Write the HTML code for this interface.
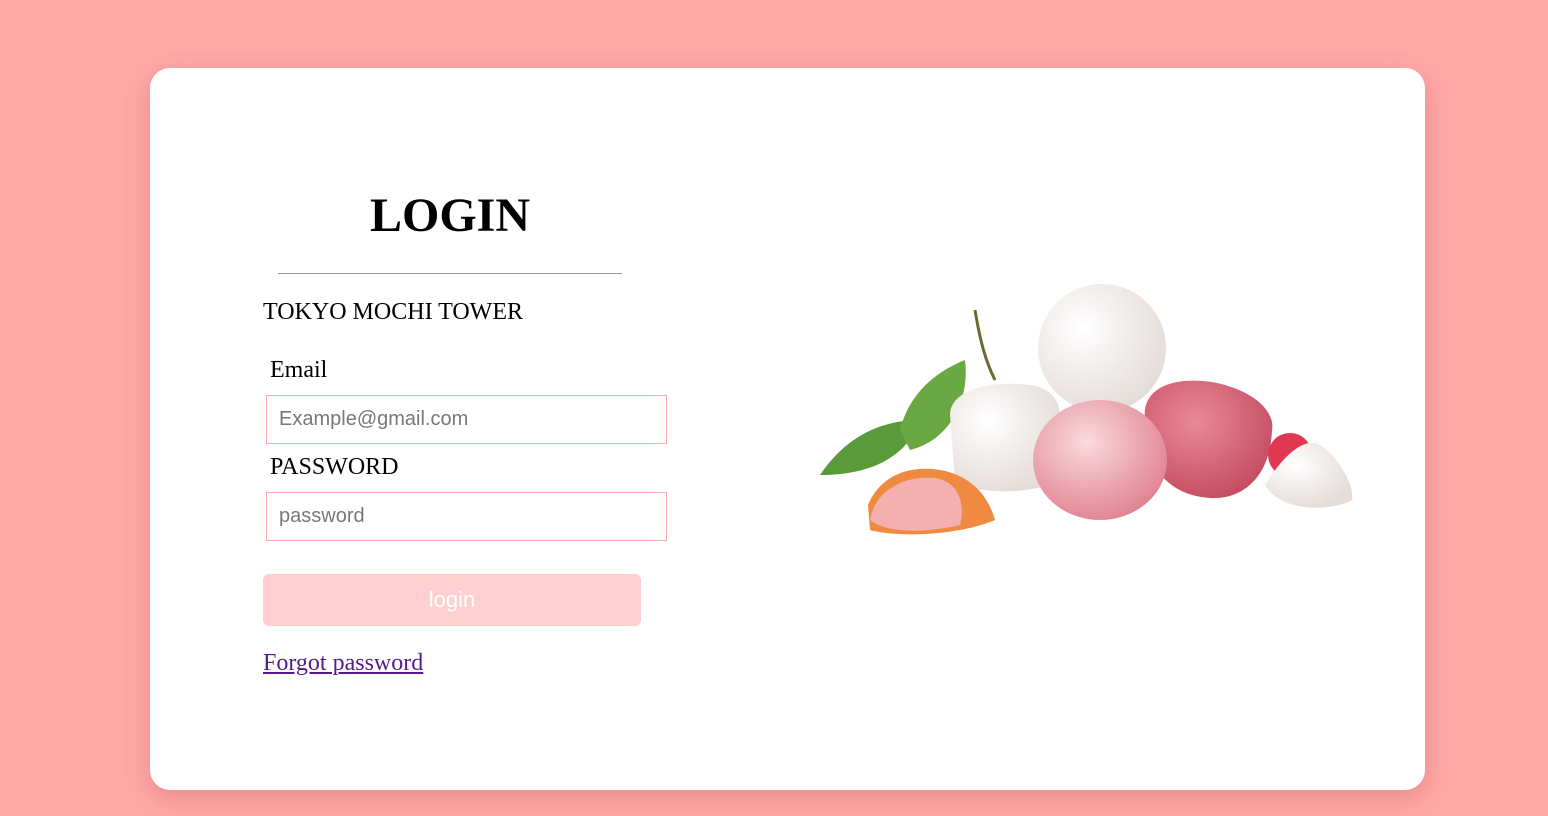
<!DOCTYPE html>
<html><head><meta charset="utf-8"><style>
html,body{margin:0;padding:0}
body{width:1548px;height:816px;background:#ffa8a8;position:relative;overflow:hidden;font-family:"Liberation Serif",serif}
.card{position:absolute;left:150px;top:68px;width:1275px;height:722px;background:#fff;border-radius:20px;box-shadow:0 8px 24px rgba(200,80,80,.35)}
h1{position:absolute;left:0;width:600px;top:188px;margin:0;text-align:center;font-size:48px;font-weight:bold;line-height:56px}
.hr{position:absolute;left:278px;top:273px;width:344px;height:1px;background:#999}
.t{position:absolute;font-size:24px;line-height:26px;color:#000}
.inp{position:absolute;left:266px;width:401px;height:49px;border:1px solid #ffadb5;box-sizing:border-box;font-family:"Liberation Sans",sans-serif;font-size:20px;color:#777;padding-left:12px;line-height:47px}
.btn{position:absolute;left:263px;top:574px;width:378px;height:52px;background:#ffcfd1;border-radius:6px;color:#fff;font-family:"Liberation Sans",sans-serif;font-size:22px;text-align:center;line-height:52px}
a{position:absolute;left:263px;top:650px;font-size:24px;color:#551a8b;text-decoration:underline}
</style></head><body>
<div class="card"></div>
<h1 style="left:150px">LOGIN</h1>
<div class="hr"></div>
<div class="t" style="left:263px;top:299px">TOKYO MOCHI TOWER</div>
<div class="t" style="left:270px;top:357px">Email</div>
<div class="inp" style="top:395px">Example@gmail.com</div>
<div class="t" style="left:270px;top:454px">PASSWORD</div>
<div class="inp" style="top:492px">password</div>
<div class="btn">login</div>
<a>Forgot password</a>
<svg style="position:absolute;left:810px;top:280px" width="560" height="270" viewBox="0 0 560 270">
<defs>
<radialGradient id="w" cx=".35" cy=".35" r=".7"><stop offset="0" stop-color="#fff"/><stop offset="1" stop-color="#e4dcd8"/></radialGradient>
<radialGradient id="p" cx=".4" cy=".35" r=".7"><stop offset="0" stop-color="#fadadd"/><stop offset="1" stop-color="#e0808f"/></radialGradient>
<radialGradient id="r" cx=".4" cy=".35" r=".7"><stop offset="0" stop-color="#e88a98"/><stop offset="1" stop-color="#c44a60"/></radialGradient>
</defs>
<path d="M10 195 C40 150 80 140 110 140 C100 170 70 195 10 195Z" fill="#5a9a3a"/>
<path d="M90 150 C100 110 130 90 155 80 C160 120 140 160 100 170Z" fill="#6aa844"/>
<path d="M165 30 C170 60 175 80 185 100" stroke="#6a6a30" stroke-width="3" fill="none"/>
<path d="M140 135 C140 110 180 100 220 105 C250 110 250 130 250 140 L245 200 C230 215 160 215 145 200Z" fill="url(#w)"/>
<circle cx="292" cy="68" r="64" fill="url(#w)"/>
<path d="M335 140 C330 100 380 95 415 105 C450 115 465 135 462 150 C460 200 430 220 400 218 C360 215 335 190 335 140Z" fill="url(#r)"/>
<circle cx="480" cy="175" r="22" fill="#e03850"/>
<path d="M455 205 C470 180 490 160 505 163 C525 170 545 205 542 220 C520 232 470 232 455 205Z" fill="url(#w)"/>
<ellipse cx="290" cy="180" rx="67" ry="60" fill="url(#p)"/>
<path d="M58 225 C70 195 100 185 130 190 C160 195 178 215 185 240 C150 255 90 258 60 250Z" fill="#f08a40"/>
<path d="M60 240 C65 210 95 195 125 198 C150 202 155 225 150 245 C120 252 80 255 60 240Z" fill="#f4b0b0"/>
</svg>
</body></html>
